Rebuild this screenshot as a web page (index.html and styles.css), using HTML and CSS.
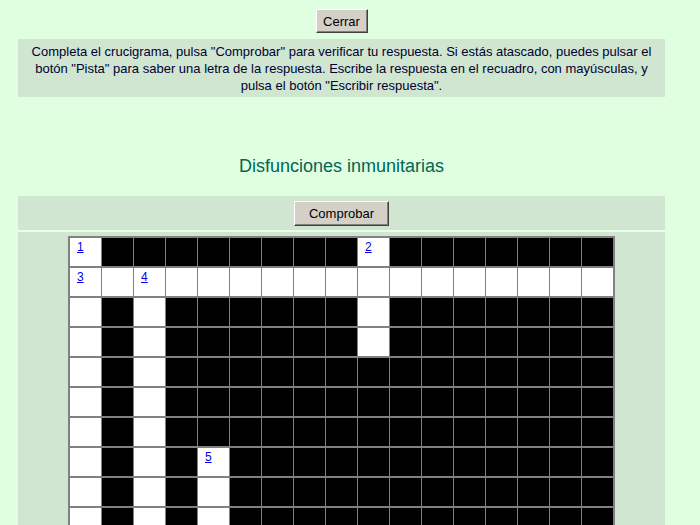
FILE: index.html
```html
<!DOCTYPE html>
<html lang="es">
<head>
<meta charset="utf-8">
<title>Disfunciones inmunitarias</title>
<link rel="stylesheet" href="styles.css">
</head>
<body>
<div class="page">
<div class="top"><button class="btn btn-close">Cerrar</button></div>
<div class="instr">Completa el crucigrama, pulsa "Comprobar" para verificar tu respuesta. Si estás atascado, puedes pulsar el<br>botón "Pista" para saber una letra de la respuesta. Escribe la respuesta en el recuadro, con mayúsculas, y<br>pulsa el botón "Escribir respuesta".</div>
<h2 class="title">Disfunciones inmunitarias</h2>
<div class="cw">
  <div class="cw-head"><button class="btn btn-check">Comprobar</button></div>
  <div class="grid">
    <!-- row 1 -->
    <div class="w"><a class="num" href="#">1</a></div><div class="b"></div><div class="b"></div><div class="b"></div><div class="b"></div><div class="b"></div><div class="b"></div><div class="b"></div><div class="b"></div><div class="w"><a class="num" href="#">2</a></div><div class="b"></div><div class="b"></div><div class="b"></div><div class="b"></div><div class="b"></div><div class="b"></div><div class="b"></div>
    <!-- row 2 -->
    <div class="w"><a class="num" href="#">3</a></div><div class="w"></div><div class="w"><a class="num" href="#">4</a></div><div class="w"></div><div class="w"></div><div class="w"></div><div class="w"></div><div class="w"></div><div class="w"></div><div class="w"></div><div class="w"></div><div class="w"></div><div class="w"></div><div class="w"></div><div class="w"></div><div class="w"></div><div class="w"></div>
    <!-- row 3 -->
    <div class="w"></div><div class="b"></div><div class="w"></div><div class="b"></div><div class="b"></div><div class="b"></div><div class="b"></div><div class="b"></div><div class="b"></div><div class="w"></div><div class="b"></div><div class="b"></div><div class="b"></div><div class="b"></div><div class="b"></div><div class="b"></div><div class="b"></div>
    <!-- row 4 -->
    <div class="w"></div><div class="b"></div><div class="w"></div><div class="b"></div><div class="b"></div><div class="b"></div><div class="b"></div><div class="b"></div><div class="b"></div><div class="w"></div><div class="b"></div><div class="b"></div><div class="b"></div><div class="b"></div><div class="b"></div><div class="b"></div><div class="b"></div>
    <!-- row 5 -->
    <div class="w"></div><div class="b"></div><div class="w"></div><div class="b"></div><div class="b"></div><div class="b"></div><div class="b"></div><div class="b"></div><div class="b"></div><div class="b"></div><div class="b"></div><div class="b"></div><div class="b"></div><div class="b"></div><div class="b"></div><div class="b"></div><div class="b"></div>
    <!-- row 6 -->
    <div class="w"></div><div class="b"></div><div class="w"></div><div class="b"></div><div class="b"></div><div class="b"></div><div class="b"></div><div class="b"></div><div class="b"></div><div class="b"></div><div class="b"></div><div class="b"></div><div class="b"></div><div class="b"></div><div class="b"></div><div class="b"></div><div class="b"></div>
    <!-- row 7 -->
    <div class="w"></div><div class="b"></div><div class="w"></div><div class="b"></div><div class="b"></div><div class="b"></div><div class="b"></div><div class="b"></div><div class="b"></div><div class="b"></div><div class="b"></div><div class="b"></div><div class="b"></div><div class="b"></div><div class="b"></div><div class="b"></div><div class="b"></div>
    <!-- row 8 -->
    <div class="w"></div><div class="b"></div><div class="w"></div><div class="b"></div><div class="w"><a class="num" href="#">5</a></div><div class="b"></div><div class="b"></div><div class="b"></div><div class="b"></div><div class="b"></div><div class="b"></div><div class="b"></div><div class="b"></div><div class="b"></div><div class="b"></div><div class="b"></div><div class="b"></div>
    <!-- row 9 -->
    <div class="w"></div><div class="b"></div><div class="w"></div><div class="b"></div><div class="w"></div><div class="b"></div><div class="b"></div><div class="b"></div><div class="b"></div><div class="b"></div><div class="b"></div><div class="b"></div><div class="b"></div><div class="b"></div><div class="b"></div><div class="b"></div><div class="b"></div>
    <!-- row 10 -->
    <div class="w"></div><div class="b"></div><div class="w"></div><div class="b"></div><div class="w"></div><div class="b"></div><div class="b"></div><div class="b"></div><div class="b"></div><div class="b"></div><div class="b"></div><div class="b"></div><div class="b"></div><div class="b"></div><div class="b"></div><div class="b"></div><div class="b"></div>
  </div>
</div>
</div>
</body>
</html>
```

FILE: styles.css
```css
html, body {
  background: #e0ffe0;
}

body {
  margin: 8px;
  font-family: "Liberation Sans", Arial, sans-serif;
  color: #000033;
}

.page {
  margin-left: 10px;
  width: 647px;
}

.top {
  text-align: center;
  padding-top: 1px;
}

.btn {
  font-family: "Liberation Sans", Arial, sans-serif;
  font-size: 13px;
  color: #000000;
  background: #d4d0c8;
  border: 1px solid;
  border-color: #ffffff #404040 #404040 #ffffff;
  box-shadow: inset -1px -1px 0 #808080;
  padding: 0;
  margin: 0;
  vertical-align: top;
}

.btn-close {
  width: 52px;
  height: 24px;
}

.btn-check {
  width: 95px;
  height: 25px;
}

.instr {
  margin-top: 6px;
  background: #d0e6d0;
  padding: 4px 0 3px;
  text-align: center;
  font-size: 13px;
  line-height: 17px;
  white-space: nowrap;
}

.title {
  margin: 58px 0 0;
  font-size: 18px;
  line-height: 22px;
  font-weight: normal;
  text-align: center;
  color: #006655;
}

.cw {
  margin-top: 19px;
  background: #d0e6d0;
  padding-bottom: 20px;
}

.cw-head {
  padding: 5px 0 4px;
  text-align: center;
  border-bottom: 2px solid #e8ffe8;
}

.grid {
  display: grid;
  grid-template-columns: repeat(17, 31px);
  grid-auto-rows: 28px;
  column-gap: 1px;
  row-gap: 2px;
  background: #808080;
  padding: 1px;
  border: 1px solid #808080;
  width: max-content;
  margin: 4px auto 0;
}

.w {
  background: #ffffff;
}

.b {
  background: #000000;
}

.num {
  display: block;
  padding: 2px 0 0 7px;
  font-size: 12px;
  line-height: 14px;
  color: #0000ee;
  text-decoration: underline;
}
```
